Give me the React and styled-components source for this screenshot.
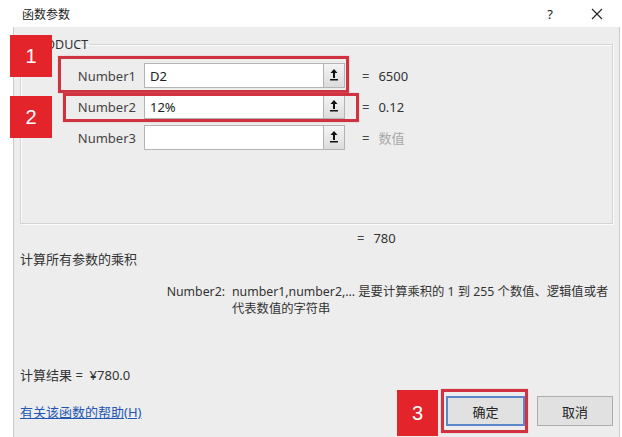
import styled, { createGlobalStyle } from "styled-components";

const GlobalStyle = createGlobalStyle`
  html, body {
    margin: 0;
    padding: 0;
    background: #ffffff;
  }
  body {
    font-family: "Noto Sans", "Noto Sans CJK SC", sans-serif;
    color: #333;
  }
`;

const Window = styled.div`
  position: relative;
  width: 622px;
  height: 437px;
  overflow: hidden;
  display: flex;
  flex-direction: column;
  background: #fff;
`;

const TitleBar = styled.div`
  height: 27px;
  display: flex;
  align-items: center;
  padding-left: 22px;
  font-size: 12px;
  color: #222;
`;

const Title = styled.div`
  flex: 1;
`;

const TitleBtn = styled.div`
  width: 24px;
  display: flex;
  justify-content: center;
  margin-right: ${(p) => p.mr || 0}px;
  font-size: 13px;
`;

const Body = styled.div`
  flex: 1;
  margin: 0 2px 0 13px;
  border-left: 1px solid #c9c9c9;
  border-right: 1px solid #c9c9c9;
  background: #ededed;
  padding: 10px 6px 0 6px;
  font-size: 13px;
  display: flex;
  flex-direction: column;
`;

const GroupBox = styled.fieldset`
  margin: 0;
  padding: 11px 0 0 0;
  height: 187px;
  flex-shrink: 0;
  box-sizing: border-box;
  border: 1px solid #d4d4d4;
  box-shadow: inset 1px 1px 0 #fbfbfb, 1px 1px 0 #fbfbfb;
`;

const Legend = styled.legend`
  margin-left: 7px;
  padding: 0 2px;
  font-size: 12.5px;
  color: #333;
  line-height: 15px;
`;

const ArgRow = styled.div`
  display: flex;
  align-items: center;
  height: 25px;
  margin-bottom: 6px;
`;

const ArgLabel = styled.div`
  width: 115px;
  text-align: right;
  margin-right: 8px;
  color: #444;
`;

const ArgInput = styled.div`
  width: 179px;
  height: 25px;
  box-sizing: border-box;
  border: 1px solid #b4b4b4;
  border-right: none;
  background: #fff;
  padding-left: 5px;
  display: flex;
  align-items: center;
  color: #222;
`;

const RefButton = styled.div`
  width: 22px;
  height: 25px;
  box-sizing: border-box;
  border: 1px solid #b4b4b4;
  background: linear-gradient(#f4f4f4, #dcdcdc);
  display: flex;
  align-items: flex-start;
  justify-content: center;
  padding-top: 4px;
`;

const Eq = styled.span`
  margin-left: ${(p) => p.ml || 17}px;
  margin-right: 9px;
  color: #444;
`;

const Val = styled.span`
  color: ${(p) => (p.muted ? "#a8a8a8" : "#333")};
`;

const ResultLine = styled.div`
  margin-top: 5px;
  height: 17px;
  display: flex;
  align-items: center;
`;

const Desc = styled.div`
  margin-top: 3px;
  height: 18px;
  display: flex;
  align-items: center;
  color: #333;
`;

const ArgHelp = styled.div`
  margin-top: 16px;
  display: flex;
  line-height: 17px;
  font-size: 12.3px;
  color: #333;
  white-space: nowrap;
`;

const ArgHelpName = styled.div`
  width: 212px;
  text-align: right;
  flex-shrink: 0;
  padding-right: 7px;
  box-sizing: border-box;
`;

const Calc = styled.div`
  margin-top: 48px;
  height: 18px;
  display: flex;
  align-items: center;
  white-space: pre;
`;

const Footer = styled.div`
  margin-top: 13px;
  display: flex;
  align-items: center;
`;

const HelpLink = styled.a`
  flex: 1;
  color: #2156b5;
  text-decoration: underline;
  cursor: pointer;
`;

const Button = styled.button`
  width: ${(p) => p.w}px;
  height: 30px;
  margin-left: 12px;
  box-sizing: border-box;
  font-family: inherit;
  font-size: 13px;
  color: #222;
  background: #e1e1e1;
  border: ${(p) => (p.primary ? "2px solid #5b86c9" : "1px solid #adadad")};
  padding: 0;
`;

const Badge = styled.div`
  position: absolute;
  left: ${(p) => p.x}px;
  top: ${(p) => p.y}px;
  width: ${(p) => p.w}px;
  height: ${(p) => p.h}px;
  background: #e3242b;
  color: #fff;
  font-size: 20px;
  display: flex;
  align-items: center;
  justify-content: center;
  font-family: "Liberation Sans", sans-serif;
`;

const Highlight = styled.div`
  position: absolute;
  left: ${(p) => p.x}px;
  top: ${(p) => p.y}px;
  width: ${(p) => p.w}px;
  height: ${(p) => p.h}px;
  box-sizing: border-box;
  border: 3px solid #cf3340;
  box-shadow: 0 0 1px #e68a92;
`;

const UpIcon = () => (
  <svg width="10" height="13" viewBox="0 0 10 13">
    <path d="M5 1 L1.5 5 H4 V10 H6 V5 H8.5 Z" fill="#111" />
    <rect x="1" y="11" width="8" height="1.5" fill="#111" />
  </svg>
);

const CloseIcon = () => (
  <svg width="12" height="12" viewBox="0 0 12 12">
    <path d="M1 1 L11 11 M11 1 L1 11" stroke="#222" strokeWidth="1.1" />
  </svg>
);

const args = [
  { name: "Number1", value: "D2", result: "6500" },
  { name: "Number2", value: "12%", result: "0.12" },
  { name: "Number3", value: "", result: "数值", muted: true },
];

export default function App() {
  return (
    <Window>
      <GlobalStyle />
      <TitleBar>
        <Title>函数参数</Title>
        <TitleBtn mr={23}>?</TitleBtn>
        <TitleBtn mr={13}>
          <CloseIcon />
        </TitleBtn>
      </TitleBar>
      <Body>
        <GroupBox>
          <Legend>PRODUCT</Legend>
          {args.map((a) => (
            <ArgRow key={a.name}>
              <ArgLabel>{a.name}</ArgLabel>
              <ArgInput>{a.value}</ArgInput>
              <RefButton>
                <UpIcon />
              </RefButton>
              <Eq>=</Eq>
              <Val muted={a.muted}>{a.result}</Val>
            </ArgRow>
          ))}
        </GroupBox>
        <ResultLine>
          <Eq ml={337}>=</Eq>
          <Val>780</Val>
        </ResultLine>
        <Desc>计算所有参数的乘积</Desc>
        <ArgHelp>
          <ArgHelpName>Number2:</ArgHelpName>
          <div>
            number1,number2,... 是要计算乘积的 1 到 255 个数值、逻辑值或者
            <br />
            代表数值的字符串
          </div>
        </ArgHelp>
        <Calc>计算结果 =  ¥780.0</Calc>
        <Footer>
          <HelpLink>有关该函数的帮助(H)</HelpLink>
          <Button primary w={79}>
            确定
          </Button>
          <Button w={76}>取消</Button>
        </Footer>
      </Body>

      <Highlight x={58} y={56} w={291} h={37} />
      <Highlight x={63} y={93} w={296} h={29} />
      <Highlight x={441} y={389} w={87} h={44} />
      <Badge x={10} y={35} w={42} h={42}>1</Badge>
      <Badge x={10} y={96} w={42} h={42}>2</Badge>
      <Badge x={397} y={390} w={41} h={46}>3</Badge>
    </Window>
  );
}
